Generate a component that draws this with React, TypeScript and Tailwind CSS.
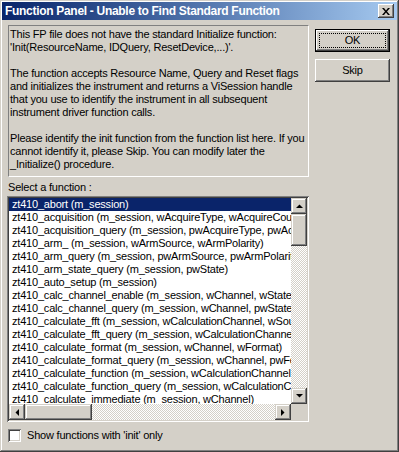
const raised =
  "shadow-[inset_-1px_-1px_#404040,inset_1px_1px_#d4d0c8,inset_-2px_-2px_#808080,inset_2px_2px_#ffffff]";
const pushBtn =
  "shadow-[inset_-1px_-1px_#404040,inset_1px_1px_#ffffff,inset_-2px_-2px_#808080,inset_2px_2px_#d4d0c8]";
const checker =
  "bg-[repeating-conic-gradient(#ffffff_0%_25%,#d4d0c8_0%_50%)] bg-[length:2px_2px]";

const functions = [
  "zt410_abort (m_session)",
  "zt410_acquisition (m_session, wAcquireType, wAcquireCount)",
  "zt410_acquisition_query (m_session, pwAcquireType, pwAcquireCount)",
  "zt410_arm_ (m_session, wArmSource, wArmPolarity)",
  "zt410_arm_query (m_session, pwArmSource, pwArmPolarity)",
  "zt410_arm_state_query (m_session, pwState)",
  "zt410_auto_setup (m_session)",
  "zt410_calc_channel_enable (m_session, wChannel, wState)",
  "zt410_calc_channel_query (m_session, wChannel, pwState)",
  "zt410_calculate_fft (m_session, wCalculationChannel, wSource)",
  "zt410_calculate_fft_query (m_session, wCalculationChannel, pwSource)",
  "zt410_calculate_format (m_session, wChannel, wFormat)",
  "zt410_calculate_format_query (m_session, wChannel, pwFormat)",
  "zt410_calculate_function (m_session, wCalculationChannel, wFunction)",
  "zt410_calculate_function_query (m_session, wCalculationChannel, pwFunction)",
  "zt410_calculate_immediate (m_session, wChannel)",
];

const message = [
  "This FP file does not have the standard Initialize function:",
  "'Init(ResourceName, IDQuery, ResetDevice,...)'.",
  "",
  "The function accepts Resource Name, Query and Reset flags",
  "and initializes the instrument and returns a ViSession handle",
  "that you use to identify the instrument in all subsequent",
  "instrument driver function calls.",
  "",
  "Please identify the init function from the function list here. If you",
  "cannot identify it, please Skip. You can modify later the",
  "_Initialize() procedure.",
];

function Arrow({ dir }: { dir: "up" | "down" | "left" | "right" }) {
  const pts = {
    up: "0,4 7,4 3.5,0.5",
    down: "0,0 7,0 3.5,3.5",
    left: "4,0 4,7 0.5,3.5",
    right: "0,0 0,7 3.5,3.5",
  }[dir];
  const w = dir === "up" || dir === "down" ? 7 : 4;
  const h = dir === "up" || dir === "down" ? 4 : 7;
  return (
    <svg width={w} height={h} viewBox={`0 0 ${w} ${h}`}>
      <polygon points={pts} fill="#000" />
    </svg>
  );
}

function ScrollBtn({ dir }: { dir: "up" | "down" | "left" | "right" }) {
  return (
    <div className={`w-[16px] h-[16px] shrink-0 bg-[#d4d0c8] flex items-center justify-center ${raised}`}>
      <Arrow dir={dir} />
    </div>
  );
}

export default function App() {
  return (
    <div className="w-[399px] h-[452px] bg-[#d4d0c8] font-['Liberation_Sans',Arial,sans-serif] text-[11px] leading-[13px] tracking-[-0.2px] text-black overflow-hidden">
      <div className="w-full h-full p-[2px] shadow-[inset_-1px_-1px_#404040,inset_1px_1px_#d4d0c8,inset_-2px_-2px_#808080,inset_2px_2px_#ffffff] flex flex-col">
        {/* title bar */}
        <div className="h-[18px] shrink-0 bg-gradient-to-r from-[#0a246a] to-[#a6caf0] flex items-center justify-between pl-[3px] pr-[3px]">
          <span className="text-white font-bold text-[12px] tracking-[-0.3px] whitespace-nowrap">
            Function Panel - Unable to Find Standard Function
          </span>
          <div className={`w-[16px] h-[14px] bg-[#d4d0c8] flex items-center justify-center ${pushBtn}`}>
            <svg width="8" height="7" viewBox="0 0 8 7">
              <path d="M0 0h2l2 2.5L6 0h2L5 3.5 8 7H6L4 4.5 2 7H0l3-3.5z" fill="#000" />
            </svg>
          </div>
        </div>

        {/* body */}
        <div className="flex pl-[5px] pt-[5px]">
          <div className="w-[302px] flex flex-col">
            <div className="ml-[1px] w-[301px] h-[152px] border border-t-[#808080] border-l-[#808080] border-b-white border-r-white pl-[1px] pt-[2px] whitespace-nowrap">
              {message.map((l, i) => (
                <div key={i} className="h-[13px]">{l}</div>
              ))}
            </div>

            <div className="mt-[4px] ml-[1px] h-[13px]">Select a function :</div>

            <div className="mt-[2px] w-[302px] h-[226px] p-[2px] bg-white shadow-[inset_1px_1px_#808080,inset_-1px_-1px_#ffffff,inset_2px_2px_#404040,inset_-2px_-2px_#d4d0c8] flex flex-col">
              <div className="flex h-[206px]">
                <div className="flex-1 overflow-hidden">
                  {functions.map((f, i) => (
                    <div
                      key={f}
                      className={`h-[13px] pl-[3px] whitespace-nowrap ${i === 0 ? "bg-[#0a246a] text-white" : ""}`}
                    >
                      {f}
                    </div>
                  ))}
                </div>
                <div className="w-[16px] flex flex-col">
                  <ScrollBtn dir="up" />
                  <div className={`h-[32px] shrink-0 bg-[#d4d0c8] ${raised}`} />
                  <div className={`flex-1 ${checker}`} />
                  <ScrollBtn dir="down" />
                </div>
              </div>
              <div className="flex h-[16px]">
                <ScrollBtn dir="left" />
                <div className={`w-[67px] bg-[#d4d0c8] ${raised}`} />
                <div className={`flex-1 ${checker}`} />
                <ScrollBtn dir="right" />
                <div className="w-[16px] bg-[#d4d0c8]" />
              </div>
            </div>

            <label className="mt-[7px] ml-[1px] flex items-center gap-[6px] h-[13px]">
              <span className="w-[13px] h-[13px] bg-white shadow-[inset_1px_1px_#808080,inset_-1px_-1px_#ffffff,inset_2px_2px_#404040,inset_-2px_-2px_#d4d0c8]" />
              <span>Show functions with 'init' only</span>
            </label>
          </div>

          <div className="ml-[6px] pt-[4px] flex flex-col gap-[7px]">
            <div className="w-[75px] h-[23px] border border-black">
              <div className={`w-full h-full bg-[#d4d0c8] p-[3px] ${pushBtn}`}>
                <div className="w-full h-full border border-dotted border-black flex items-center justify-center">
                  OK
                </div>
              </div>
            </div>
            <div className={`w-[75px] h-[23px] bg-[#d4d0c8] flex items-center justify-center ${pushBtn}`}>
              Skip
            </div>
          </div>
        </div>
      </div>
    </div>
  );
}
